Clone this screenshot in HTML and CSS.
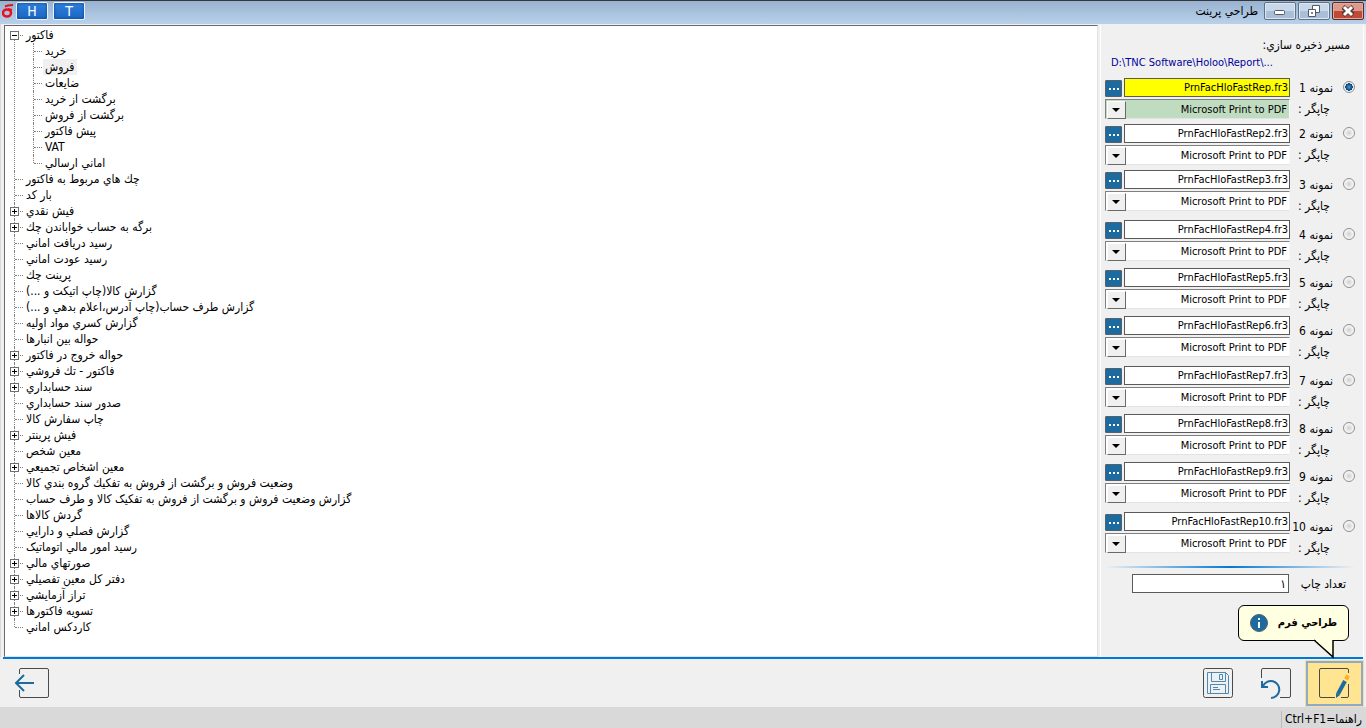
FILE: index.html
```
<!DOCTYPE html>
<html lang="fa">
<head>
    <meta charset="UTF-8">
    <title>طراحي پرينت</title>
    <link rel="stylesheet" href="styles.css">
</head>
<body>
<header class="titlebar">
    <svg class="logo" viewBox="0 0 12 16" width="12" height="16">
        <ellipse cx="5" cy="10" rx="4" ry="3.500" fill="none" stroke="#e8101c" stroke-width="2.500"/>
        <path d="M3 3.500l3-1 5-.5" fill="none" stroke="#e8101c" stroke-width="2"/>
        <path d="M6 6l4 1" fill="none" stroke="#e8101c" stroke-width="2"/>
    </svg>
    <button class="key">H</button>
    <button class="key">T</button>
    <h1 dir="rtl">طراحي پرينت</h1>
    <div class="win-buttons">
        <button class="win" aria-label="Minimize">
            <svg viewBox="0 0 12 12" width="12" height="12"><rect x=".5" y="5.500" width="10" height="4" rx="1" fill="#fff" stroke="#555b66"/></svg>
        </button>
        <button class="win" aria-label="Restore">
            <svg viewBox="0 0 12 12" width="12" height="12"><path d="M4.500 .5h7v7h-7z" fill="#fff" stroke="#555b66"/><path d="M.5 4.500h7v7h-7zM3.500 7.500h1v1h-1z" fill="#fff" stroke="#555b66"/></svg>
        </button>
        <button class="win close" aria-label="Close">
            <svg viewBox="0 0 12 12" width="12" height="12"><path d="M1 2l10 8M11 2l-10 8" stroke="#54383a" stroke-width="5"/><path d="M2 2l8 8M10 2l-8 8" stroke="#fff" stroke-width="3"/></svg>
        </button>
    </div>
</header>

<main class="content">
    <ul class="tree">
        <li><button class="toggle open" aria-label="collapse"></button><span dir="rtl">فاكتور</span>
            <ul>
                <li><span dir="rtl">خريد</span></li>
                <li><span dir="rtl" class="selected">فروش</span></li>
                <li><span dir="rtl">ضايعات</span></li>
                <li><span dir="rtl">برگشت از خريد</span></li>
                <li><span dir="rtl">برگشت از فروش</span></li>
                <li><span dir="rtl">پيش فاكتور</span></li>
                <li><span>VAT</span></li>
                <li><span dir="rtl">اماني ارسالي</span></li>
            </ul>
        </li>
        <li><span dir="rtl">چك هاي مربوط به فاكتور</span></li>
        <li><span dir="rtl">بار كد</span></li>
        <li><button class="toggle" aria-label="expand"></button><span dir="rtl">فيش نقدي</span></li>
        <li><button class="toggle" aria-label="expand"></button><span dir="rtl">برگه به حساب خواباندن چك</span></li>
        <li><span dir="rtl">رسيد دريافت اماني</span></li>
        <li><span dir="rtl">رسيد عودت اماني</span></li>
        <li><span dir="rtl">پرينت چك</span></li>
        <li><span dir="rtl">گزارش كالا(چاپ اتيكت و ...)</span></li>
        <li><span dir="rtl">گزارش طرف حساب(چاپ آدرس،اعلام بدهي و ...)</span></li>
        <li><span dir="rtl">گزارش كسري مواد اوليه</span></li>
        <li><span dir="rtl">حواله بين انبارها</span></li>
        <li><button class="toggle" aria-label="expand"></button><span dir="rtl">حواله خروج در فاكتور</span></li>
        <li><button class="toggle" aria-label="expand"></button><span dir="rtl">فاكتور - تك فروشي</span></li>
        <li><button class="toggle" aria-label="expand"></button><span dir="rtl">سند حسابداري</span></li>
        <li><span dir="rtl">صدور سند حسابداري</span></li>
        <li><span dir="rtl">چاپ سفارش كالا</span></li>
        <li><button class="toggle" aria-label="expand"></button><span dir="rtl">فيش پرينتر</span></li>
        <li><span dir="rtl">معين شخص</span></li>
        <li><button class="toggle" aria-label="expand"></button><span dir="rtl">معين اشخاص تجميعي</span></li>
        <li><span dir="rtl">وضعيت فروش و برگشت از فروش به تفكيك گروه بندي كالا</span></li>
        <li><span dir="rtl">گزارش وضعيت فروش و برگشت از فروش به تفکیک کالا و طرف حساب</span></li>
        <li><span dir="rtl">گردش كالاها</span></li>
        <li><span dir="rtl">گزارش فصلي و دارايي</span></li>
        <li><span dir="rtl">رسيد امور مالي اتوماتیک</span></li>
        <li><button class="toggle" aria-label="expand"></button><span dir="rtl">صورتهاي مالي</span></li>
        <li><button class="toggle" aria-label="expand"></button><span dir="rtl">دفتر كل معين تفصيلي</span></li>
        <li><button class="toggle" aria-label="expand"></button><span dir="rtl">تراز آزمايشي</span></li>
        <li><button class="toggle" aria-label="expand"></button><span dir="rtl">تسويه فاكتورها</span></li>
        <li><span dir="rtl">كاردكس اماني</span></li>
    </ul>

    <aside class="side" dir="rtl">
        <div class="path-label">مسير ذخيره سازي:</div>
        <div class="path" dir="ltr">D:\TNC Software\Holoo\Report\...</div>

        <div class="sample active tight">
            <input type="radio" name="sample" id="s1" checked>
            <div class="labels"><label for="s1">نمونه 1</label><label for="p1">چاپگر :</label></div>
            <div class="fields">
                <div class="file"><input type="text" dir="ltr" aria-label="نمونه 1" value="PrnFacHloFastRep.fr3"><button class="more" aria-label="browse"></button></div>
                <div class="combo"><select id="p1"><option>Microsoft Print to PDF</option></select></div>
            </div>
        </div>
        <div class="sample tight">
            <input type="radio" name="sample" id="s2">
            <div class="labels"><label for="s2">نمونه 2</label><label for="p2">چاپگر :</label></div>
            <div class="fields">
                <div class="file"><input type="text" dir="ltr" aria-label="نمونه 2" value="PrnFacHloFastRep2.fr3"><button class="more" aria-label="browse"></button></div>
                <div class="combo"><select id="p2"><option>Microsoft Print to PDF</option></select></div>
            </div>
        </div>
        <div class="sample low wide">
            <input type="radio" name="sample" id="s3">
            <div class="labels"><label for="s3">نمونه 3</label><label for="p3">چاپگر :</label></div>
            <div class="fields">
                <div class="file"><input type="text" dir="ltr" aria-label="نمونه 3" value="PrnFacHloFastRep3.fr3"><button class="more" aria-label="browse"></button></div>
                <div class="combo"><select id="p3"><option>Microsoft Print to PDF</option></select></div>
            </div>
        </div>
        <div class="sample low">
            <input type="radio" name="sample" id="s4">
            <div class="labels"><label for="s4">نمونه 4</label><label for="p4">چاپگر :</label></div>
            <div class="fields">
                <div class="file"><input type="text" dir="ltr" aria-label="نمونه 4" value="PrnFacHloFastRep4.fr3"><button class="more" aria-label="browse"></button></div>
                <div class="combo"><select id="p4"><option>Microsoft Print to PDF</option></select></div>
            </div>
        </div>
        <div class="sample low">
            <input type="radio" name="sample" id="s5">
            <div class="labels"><label for="s5">نمونه 5</label><label for="p5">چاپگر :</label></div>
            <div class="fields">
                <div class="file"><input type="text" dir="ltr" aria-label="نمونه 5" value="PrnFacHloFastRep5.fr3"><button class="more" aria-label="browse"></button></div>
                <div class="combo"><select id="p5"><option>Microsoft Print to PDF</option></select></div>
            </div>
        </div>
        <div class="sample low wide">
            <input type="radio" name="sample" id="s6">
            <div class="labels"><label for="s6">نمونه 6</label><label for="p6">چاپگر :</label></div>
            <div class="fields">
                <div class="file"><input type="text" dir="ltr" aria-label="نمونه 6" value="PrnFacHloFastRep6.fr3"><button class="more" aria-label="browse"></button></div>
                <div class="combo"><select id="p6"><option>Microsoft Print to PDF</option></select></div>
            </div>
        </div>
        <div class="sample low">
            <input type="radio" name="sample" id="s7">
            <div class="labels"><label for="s7">نمونه 7</label><label for="p7">چاپگر :</label></div>
            <div class="fields">
                <div class="file"><input type="text" dir="ltr" aria-label="نمونه 7" value="PrnFacHloFastRep7.fr3"><button class="more" aria-label="browse"></button></div>
                <div class="combo"><select id="p7"><option>Microsoft Print to PDF</option></select></div>
            </div>
        </div>
        <div class="sample low">
            <input type="radio" name="sample" id="s8">
            <div class="labels"><label for="s8">نمونه 8</label><label for="p8">چاپگر :</label></div>
            <div class="fields">
                <div class="file"><input type="text" dir="ltr" aria-label="نمونه 8" value="PrnFacHloFastRep8.fr3"><button class="more" aria-label="browse"></button></div>
                <div class="combo"><select id="p8"><option>Microsoft Print to PDF</option></select></div>
            </div>
        </div>
        <div class="sample low wide">
            <input type="radio" name="sample" id="s9">
            <div class="labels"><label for="s9">نمونه 9</label><label for="p9">چاپگر :</label></div>
            <div class="fields">
                <div class="file"><input type="text" dir="ltr" aria-label="نمونه 9" value="PrnFacHloFastRep9.fr3"><button class="more" aria-label="browse"></button></div>
                <div class="combo"><select id="p9"><option>Microsoft Print to PDF</option></select></div>
            </div>
        </div>
        <div class="sample low">
            <input type="radio" name="sample" id="s10">
            <div class="labels"><label for="s10">نمونه 10</label><label for="p10">چاپگر :</label></div>
            <div class="fields">
                <div class="file"><input type="text" dir="ltr" aria-label="نمونه 10" value="PrnFacHloFastRep10.fr3"><button class="more" aria-label="browse"></button></div>
                <div class="combo"><select id="p10"><option>Microsoft Print to PDF</option></select></div>
            </div>
        </div>

        <hr class="line">
        <div class="count">
            <label for="count">تعداد چاپ</label>
            <input type="text" id="count" value="۱">
        </div>
    </aside>
</main>

<footer class="toolbar">
    <button class="tool back" aria-label="بازگشت">
        <svg viewBox="0 0 36 32" width="36" height="32">
            <path d="M5.500 7V3q0-1.500 1.500-1.500h26q1.500 0 1.500 1.500v26q0 1.500-1.500 1.500H7q-1.500 0-1.500-1.500v-6" fill="none" stroke="#4a4a4a"/>
            <path d="M20 16H2M10 8l-8 8 8 8" fill="none" stroke="#1c6ba0" stroke-width="2"/>
        </svg>
    </button>
    <button class="tool" aria-label="ذخيره">
        <svg viewBox="0 0 32 32" width="32" height="32">
            <rect x="1.500" y="1.500" width="29" height="29" rx="2" fill="none" stroke="#4a4a4a"/>
            <path d="M5.500 5.500h18l3 3v18h-21zM9.500 5.500v9h14v-9M17.500 7.500h3v5h-3zM8.500 26.500v-9h15v9M11 20.500h5M11 22.500h7" fill="none" stroke="#4b8ab4"/>
        </svg>
    </button>
    <button class="tool" aria-label="بازگرداني">
        <svg viewBox="0 0 32 32" width="32" height="32">
            <path d="M1.500 11V3q0-1.500 1.500-1.500h26q1.500 0 1.500 1.500v26q0 1.500-1.500 1.500h-9" fill="none" stroke="#4a4a4a"/>
            <path d="M2 14v6h6M3 19a8.500 8.500 0 1 1 8 12" fill="none" stroke="#1c6ba0" stroke-width="2"/>
        </svg>
    </button>
    <div class="edit-wrap">
        <button class="tool edit" aria-label="طراحي فرم">
            <svg viewBox="0 0 32 32" width="32" height="32">
                <path d="M30.500 6V3q0-1.500-1.500-1.500H3Q1.500 1.500 1.500 3v26q0 1.500 1.500 1.500h14M30.500 17v12q0 1.500-1.500 1.500h-6" fill="none" stroke="#4a4a4a"/>
                <path d="M27 14l-7 13" stroke="#1c6ba0" stroke-width="4"/>
                <path d="M18 26l4 2-4 3z" fill="#1c6ba0"/>
                <path d="M28 12.500l2-4" stroke="#f9b02a" stroke-width="4"/>
            </svg>
        </button>
        <div class="hint" dir="rtl">
            <span>طراحي فرم</span>
            <svg viewBox="0 0 18 18" width="18" height="18">
                <circle cx="9" cy="9" r="8.500" fill="#1c6ba0" stroke="#55606a"/>
                <path d="M9 4v2M9 8v6" stroke="#fff" stroke-width="2"/>
            </svg>
            <svg class="tail" viewBox="0 0 22 20" width="22" height="20">
                <path d="M1 0l19 18V0" fill="#ffffe1"/>
                <path d="M1 1l19 17V1" fill="none" stroke="#000" stroke-width="1.500"/>
            </svg>
        </div>
    </div>
</footer>
<div class="statusbar"><span dir="rtl">راهنما=Ctrl+F1</span></div>
</body>
</html>
```
FILE: styles.css
```
*{
    margin:0;
    padding:0;
    box-sizing: border-box;
}
body{
    display:flex;
    flex-direction: column;
    min-height:100vh;
    background:#f0f0f0;
    color:#000;
    font:12px/16px "DejaVu Sans Condensed", "DejaVu Sans", sans-serif;
}
button,input,select{
    font:inherit;
    font-size:11px;
    color:inherit;
}
ul{
    list-style: none;
}

/* title bar */
.titlebar{
    display:flex;
    align-items: center;
    height:24px;
    padding:0 2px 3px;
    border-top:1px solid #34363c;
    background:linear-gradient(#98b2d0, #b9d1ea);
}
.logo{
    margin-right:2px;
}
.key{
    width:32px;
    height:18px;
    margin-right:5px;
    border:1px solid #e8f2fc;
    border-radius:2px;
    background:linear-gradient(#2f80da, #1a66c4);
    box-shadow:inset 0 0 3px #0a3c80;
    color:#fff;
    font-size:14px;
    line-height:16px;
}
.titlebar h1{
    margin-left:auto;
    margin-right:6px;
    font-size:12px;
    font-weight:normal;
}
.win-buttons{
    display:flex;
    gap:2px;
}
.win{
    display:flex;
    align-items: center;
    justify-content: center;
    width:32px;
    height:18px;
    border:1px solid #5f7186;
    border-radius:2px;
    background:linear-gradient(#c8d8ea 50%, #a9bfd8 50%);
    box-shadow:inset 0 0 0 1px #dce8f4;
}
.win.close{
    border-color:#5b2a2a;
    background:linear-gradient(#dc9a8c 50%, #bf4a35 50%);
    box-shadow:inset 0 0 0 1px #e3a99e;
}

/* tree */
.content{
    display:flex;
    flex:1;
    padding:1px 2px 0 3px;
    border-left:1px solid #d9d9d9;
}
.tree{
    flex:1;
    padding:1px 0 0 3px;
    border:1px solid #696969;
    border-color:#696969 #e3e3e3 #e3e3e3 #696969;
    background:#fff;
}
.tree li{
    position:relative;
    padding-left:16px;
    white-space:nowrap;
}
.tree li:before{
    content:'';
    position:absolute;
    top:0;
    bottom:0;
    left:6px;
    border-left:1px dotted #808080;
}
.tree>li:first-child:before{
    top:8px;
}
.tree li:last-child:before{
    bottom:auto;
    height:8px;
}
/* short branch to the text */
.tree li:after{
    content:'';
    position:absolute;
    top:8px;
    left:7px;
    width:8px;
    border-top:1px dotted #808080;
}
.tree li li{
    padding-left:16px;
}
.tree li ul{
    margin-left:3px;
}
.tree span{
    display:inline-block;
    height:16px;
    padding:0 2px;
    vertical-align:top;
}
.tree .selected{
    background:#f0f0f0;
}
.toggle{
    position:absolute;
    z-index:1;
    top:4px;
    left:2px;
    width:9px;
    height:9px;
    border:1px solid #707070;
    background:linear-gradient(#000,#000) center/5px 1px no-repeat, linear-gradient(#000,#000) center/1px 5px no-repeat, #fff;
}
.toggle.open{
    background:linear-gradient(#000,#000) center/5px 1px no-repeat, #fff;
}

/* side panel */
.side{
    width:264px;
    margin-left:2px;
    padding:12px 8px 0 4px;
    border:1px solid #fff;
    border-width:0 1px;
}
.path-label{
    padding-right:5px;
}
.path{
    padding-left:6px;
    margin:2px 0 7px;
    color:#00009c;
    font-size:11px;
}
.sample{
    display:flex;
    height:40px;
    margin-bottom:8px;
}
.sample.tight{
    margin-bottom:6px;
}
.sample.wide{
    margin-bottom:10px;
}
.sample input[type=radio]{
    appearance:none;
    flex:none;
    width:12px;
    height:12px;
    margin-top:3px;
    border:1px solid #8e8f8f;
    border-radius:50%;
    background:radial-gradient(#d0d0d0, #f4f4f4 60%);
    box-shadow:inset 0 0 0 1px #f4f4f4;
}
.sample input[type=radio]:checked{
    background:radial-gradient(#3ba0d8, #0b3f74 50%, #f4f4f4 55%);
}
.labels{
    display:flex;
    flex:none;
    flex-direction: column;
    gap:5px;
    width:53px;
    padding:2px 10px 0 0;
    white-space:nowrap;
}
.labels label + label{
    padding-right:3px;
}
.sample.low input[type=radio]{
    margin-top:8px;
}
.sample.low .labels{
    padding-top:7px;
}
.fields{
    display:flex;
    flex-direction: column;
    gap:2px;
    flex:1;
    min-width:0;
}
.file{
    display:flex;
    gap:2px;
}
.file input{
    flex:1;
    min-width:0;
    height:19px;
    padding:0 1px;
    border:1px solid #5a5a5a;
    background:#fff;
    text-align:right;
}
.more{
    width:17px;
    height:17px;
    margin-top:2px;
    border:1px solid #55606a;
    border-radius:1px;
    background:linear-gradient(90deg, #fff 2px, transparent 2px 4px, #fff 4px 6px, transparent 6px 8px, #fff 8px) center/10px 2px no-repeat, #1c6ba0;
}
.combo{
    position:relative;
    height:20px;
    border:1px solid #696969;
    border-color:#808080 #f8f8f8 #e3e3e3 #808080;
    background:#fff;
}
.combo select{
    appearance:none;
    display:block;
    width:100%;
    height:18px;
    padding:1px 2px 0;
    border:0;
    background:none;
}
.combo:before{
    content:'';
    position:absolute;
    top:1px;
    left:1px;
    width:17px;
    height:16px;
    border:1px solid #696969;
    border-color:#fff #696969 #696969 #fff;
    background:#f0f0f0;
    pointer-events:none;
}
.combo:after{
    content:'';
    position:absolute;
    top:8px;
    left:6px;
    border:4px solid transparent;
    border-top-color:#000;
    border-bottom:0;
    pointer-events:none;
}
.active .file input{
    background:#ff0;
}
.active .combo{
    background:#c0dcc0;
}
.line{
    height:2px;
    margin:14px 0 6px;
    border:0;
    background:linear-gradient(90deg, #f0f0f0, #0078d7 50%, #f0f0f0);
}
.count{
    display:flex;
    align-items: center;
    padding-right:9px;
}
.count label{
    width:57px;
}
.count input{
    width:157px;
    height:19px;
    padding:0 2px;
    border:1px solid #5a5a5a;
    background:#fff;
    font-size:12px;
}

/* bottom */
.toolbar{
    display:flex;
    align-items: center;
    gap:26px;
    height:50px;
    margin:0 3px;
    border-top:2px solid #0078d7;
}
.tool{
    display:flex;
    border:0;
    background:none;
}
.back{
    margin:0 auto 0 11px;
}
.edit-wrap{
    position:relative;
    margin-left:-12px;
}
.edit{
    align-items: center;
    justify-content: center;
    width:57px;
    height:45px;
    padding-right:2px;
    border:2px solid #8fa9cc;
    background:#ffe591;
    outline:1px solid #f5dfa0;
}
.hint{
    position:absolute;
    right:14px;
    bottom:65px;
    display:flex;
    align-items: center;
    justify-content: center;
    gap:10px;
    width:111px;
    height:36px;
    border:1px solid #000;
    border-radius:6px;
    background:#ffffe1;
    font-size:11px;
    font-weight:bold;
    white-space:nowrap;
}
.tail{
    position:absolute;
    right:13px;
    top:33px;
}
.statusbar{
    display:flex;
    justify-content: flex-end;
    height:21px;
    padding:4px 4px 0;
    background:#d9d9d9;
}
.statusbar span{
    padding-left:3px;
    border-left:1px solid #bcbcbc;
}
```
